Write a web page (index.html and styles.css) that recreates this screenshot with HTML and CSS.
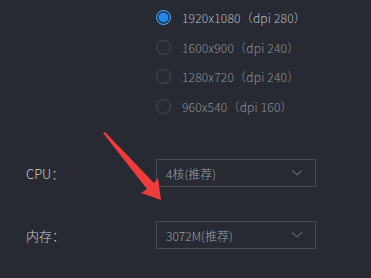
FILE: index.html
```html
<!DOCTYPE html>
<html>
<head>
<meta charset="utf-8">
<link rel="stylesheet" href="styles.css">
</head>
<body>
<div class="page">
  <ul class="radios">
    <li class="radio checked"><span class="dot"></span><span class="label">1920x1080（dpi 280）</span></li>
    <li class="radio"><span class="dot"></span><span class="label">1600x900（dpi 240）</span></li>
    <li class="radio"><span class="dot"></span><span class="label">1280x720（dpi 240）</span></li>
    <li class="radio"><span class="dot"></span><span class="label">960x540（dpi 160）</span></li>
  </ul>
  <div class="field cpu">
    <span class="name">CPU：</span>
    <div class="select"><span class="value">4核(推荐)</span>
      <svg class="chev" width="12" height="8" viewBox="0 0 12 8"><path d="M1 1.5 L6 6 L11 1.5" fill="none" stroke="#5c606a" stroke-width="1.3"/></svg>
    </div>
  </div>
  <div class="field mem">
    <span class="name">内存：</span>
    <div class="select"><span class="value">3072M(推荐)</span>
      <svg class="chev" width="12" height="8" viewBox="0 0 12 8"><path d="M1 1.5 L6 6 L11 1.5" fill="none" stroke="#5c606a" stroke-width="1.3"/></svg>
    </div>
  </div>
  <svg class="arrow" width="371" height="278" viewBox="0 0 371 278">
    <polygon points="103,133 105,132 154,183 158,178 161,200 141,193 147,189" fill="#ee3b3b"/>
  </svg>
</div>
</body>
</html>
```
FILE: styles.css
```css
html, body {
  margin: 0;
  padding: 0;
  background: #272a32;
}
.page {
  position: relative;
  width: 371px;
  height: 278px;
  overflow: hidden;
  font-family: "Microsoft YaHei", "Noto Sans CJK SC", "Noto Sans", sans-serif;
  font-weight: 300;
}
.radios {
  list-style: none;
  margin: 0;
  padding: 3px 0 0 156px;
}
.radio {
  display: flex;
  align-items: center;
  height: 29.6px;
}
.dot {
  box-sizing: border-box;
  width: 15px;
  height: 15px;
  border-radius: 50%;
  border: 1px solid #464a54;
  margin-right: 11px;
}
.radio.checked .dot {
  border: 1px solid #4aa3f5;
  background: #1e8af0;
  box-shadow: inset 0 0 0 1.5px #272a32;
}
.label {
  font-size: 12px;
  color: #8e9199;
  letter-spacing: 0.2px;
}
.radio.checked .label {
  color: #b8bbc1;
}
.field {
  display: flex;
  align-items: center;
}
.cpu { margin-top: 38px; }
.mem { margin-top: 34px; }
.name {
  width: 130px;
  padding-left: 26px;
  font-size: 13px;
  color: #c8cacf;
}
.select {
  box-sizing: border-box;
  width: 160px;
  height: 28px;
  border: 1px solid #474b55;
  display: flex;
  align-items: center;
  justify-content: space-between;
  padding: 0 12px 0 9px;
}
.value {
  font-size: 12px;
  color: #9ea1a8;
}
.chev { display: block; }
.arrow {
  position: absolute;
  left: 0;
  top: 0;
}
```
